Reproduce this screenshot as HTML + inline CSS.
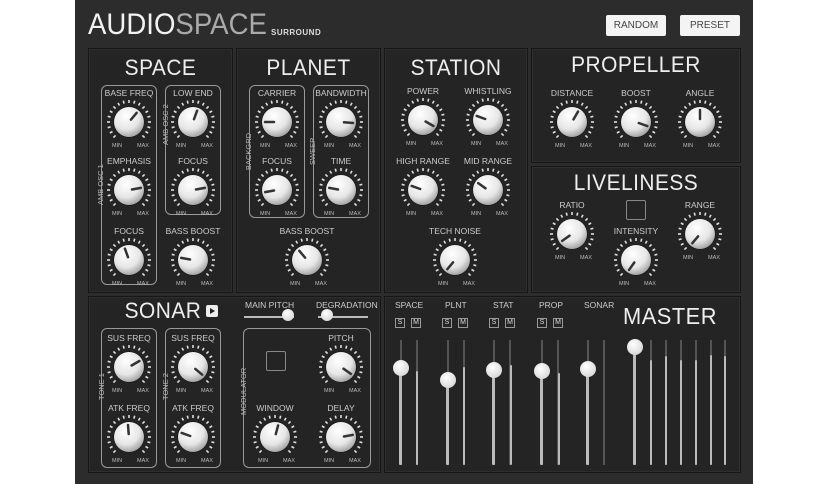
<!DOCTYPE html>
<html><head><meta charset="utf-8"><style>
*{margin:0;padding:0;box-sizing:border-box}
body{width:836px;height:484px;background:#fff;position:relative;overflow:hidden;font-family:"Liberation Sans","DejaVu Sans",sans-serif;color:#ddd}
#app{position:absolute;left:75px;top:0;width:678px;height:484px;background:#2c2c2c}
.p{position:absolute;background:#242424;border:1px solid #161616;box-shadow:inset 0 0 0 1px #2e2e2e}
.t{position:absolute;color:#eee;font-size:22px;letter-spacing:0.5px;text-align:center;font-weight:normal;transform:scaleX(0.95)}
.l{position:absolute;font-size:8.5px;color:#ccc;text-align:center;width:80px;margin-left:-40px}
.g{position:absolute;border:1px solid #999;border-radius:6px}
.v{position:absolute;font-size:7.5px;color:#bbb;transform:rotate(-90deg);transform-origin:left top;white-space:nowrap}
.btn{position:absolute;top:15px;height:21px;width:60px;background:#f4f4f4;color:#444;font-size:10px;text-align:center;line-height:21px;border-radius:2px}
.chk{position:absolute;width:20px;height:20px;border:1px solid #888;border-radius:2px}
.tr{position:absolute;width:3px;background:#bbb;border-radius:1px}
.tr2{position:absolute;width:2px;background:#555}
.h{position:absolute;width:16px;height:16px;border-radius:50%;background:radial-gradient(circle at 40% 35%,#fff,#ccc);margin-left:-7px}
.sm{position:absolute;top:318px;width:10px;height:10px;border:1px solid #999;font-size:7px;line-height:8px;text-align:center;color:#ddd}
.ml{position:absolute;top:300px;font-size:8.5px;color:#ccc}
</style></head><body>
<div id="app">
<div style="position:absolute;left:13px;top:8px;font-size:30px;color:#f2f2f2;letter-spacing:0px;transform:scaleX(0.92);transform-origin:left;font-weight:normal">AUDIO<span style="color:#aaa">SPACE</span></div>
<div style="position:absolute;left:196px;top:28px;font-size:8px;font-weight:bold;color:#ddd;letter-spacing:0.5px">SURROUND</div>
<div class="btn" style="left:531px">RANDOM</div>
<div class="btn" style="left:605px">PRESET</div>
</div>
<div class="p" style="left:88px;top:48px;width:145px;height:245px"></div>
<div class="p" style="left:236px;top:48px;width:145px;height:245px"></div>
<div class="p" style="left:384px;top:48px;width:144px;height:245px"></div>
<div class="p" style="left:531px;top:48px;width:210px;height:115px"></div>
<div class="p" style="left:531px;top:166px;width:210px;height:127px"></div>
<div class="p" style="left:88px;top:296px;width:293px;height:177px"></div>
<div class="p" style="left:384px;top:296px;width:357px;height:177px"></div>

<div class="t" style="left:88px;top:55px;width:145px">SPACE</div>
<div class="t" style="left:236px;top:55px;width:145px">PLANET</div>
<div class="t" style="left:384px;top:55px;width:144px">STATION</div>
<div class="t" style="left:531px;top:52px;width:210px">PROPELLER</div>
<div class="t" style="left:531px;top:170px;width:210px">LIVELINESS</div>
<div class="t" style="left:118px;top:298px;width:90px">SONAR</div>
<div style="position:absolute;left:206px;top:305px;width:12px;height:12px;background:#eee;border-radius:2px"><div style="position:absolute;left:4px;top:3px;border-left:5px solid #222;border-top:3px solid transparent;border-bottom:3px solid transparent"></div></div>
<div class="t" style="left:620px;top:303px;width:100px;font-size:23px">MASTER</div>

<div class="g" style="left:101px;top:85px;width:56px;height:200px"></div>
<div class="g" style="left:165px;top:85px;width:56px;height:130px"></div>
<div class="g" style="left:249px;top:85px;width:56px;height:133px"></div>
<div class="g" style="left:313px;top:85px;width:56px;height:133px"></div>
<div class="g" style="left:101px;top:328px;width:56px;height:140px"></div>
<div class="g" style="left:165px;top:328px;width:56px;height:140px"></div>
<div class="g" style="left:243px;top:328px;width:128px;height:140px"></div>
<div class="v" style="left:96px;top:205px">AMB OSC 1</div>
<div class="v" style="left:161px;top:145px">AMB OSC 2</div>
<div class="v" style="left:244px;top:170px">BACKGRD</div>
<div class="v" style="left:308px;top:165px">SWEEP</div>
<div class="v" style="left:97px;top:400px">TONE 1</div>
<div class="v" style="left:161px;top:400px">TONE 2</div>
<div class="v" style="left:239px;top:415px">MODULATOR</div>

<div class="chk" style="left:266px;top:351px"></div>
<div class="chk" style="left:626px;top:200px"></div>

<div class="ml" style="left:245px">MAIN PITCH</div>
<div class="ml" style="left:316px">DEGRADATION</div>
<div style="position:absolute;left:244px;top:316px;width:50px;height:2px;background:#bbb"></div>
<div style="position:absolute;left:318px;top:316px;width:50px;height:2px;background:#bbb"></div>
<div class="h" style="left:288px;top:309px;width:12px;height:12px;margin-left:-6px"></div>
<div class="h" style="left:327px;top:309px;width:12px;height:12px;margin-left:-6px"></div>

<div class="ml" style="left:395px">SPACE</div>
<div class="ml" style="left:445px">PLNT</div>
<div class="ml" style="left:493px">STAT</div>
<div class="ml" style="left:539px">PROP</div>
<div class="ml" style="left:584px">SONAR</div>
<div class="sm" style="left:395px">S</div><div class="sm" style="left:411px">M</div>
<div class="sm" style="left:442px">S</div><div class="sm" style="left:458px">M</div>
<div class="sm" style="left:489px">S</div><div class="sm" style="left:505px">M</div>
<div class="sm" style="left:537px">S</div><div class="sm" style="left:553px">M</div>

<div id="k"></div>
<script>
var K=[
[129,122,"BASE FREQ",40],[193,122,"LOW END",20],[129,190,"EMPHASIS",80],[193,190,"FOCUS",80],[129,260,"FOCUS",-20],[193,260,"BASS BOOST",-80],
[277,122,"CARRIER",-90],[341,122,"BANDWIDTH",95],[277,190,"FOCUS",-100],[341,190,"TIME",-80],[307,260,"BASS BOOST",-40],
[423,120,"POWER",120],[488,120,"WHISTLING",-70],[423,190,"HIGH RANGE",-70],[488,190,"MID RANGE",-55],[455,260,"TECH NOISE",-140],
[572,122,"DISTANCE",30],[636,122,"BOOST",110],[700,122,"ANGLE",0],
[572,234,"RATIO",-125],[700,234,"RANGE",-140],[636,260,"INTENSITY",-145],
[129,367,"SUS FREQ",60],[193,367,"SUS FREQ",130],[129,437,"ATK FREQ",-5],[193,437,"ATK FREQ",-70],
[341,367,"PITCH",125],[275,437,"WINDOW",15],[341,437,"DELAY",80]];
var h="";
K.forEach(function(k,i){
 var x=k[0],y=k[1],a=k[3];
 var s='<svg style="position:absolute;left:'+(x-24)+'px;top:'+(y-24)+'px" width="48" height="54" viewBox="-24 -24 48 54">';
 for(var d=-135;d<=135;d+=15){var r=d*Math.PI/180;s+='<line x1="'+(19*Math.sin(r)).toFixed(1)+'" y1="'+(-19*Math.cos(r)).toFixed(1)+'" x2="'+(22*Math.sin(r)).toFixed(1)+'" y2="'+(-22*Math.cos(r)).toFixed(1)+'" stroke="#ddd" stroke-width="1.6"/>';}
 s+='<defs><radialGradient id="g'+i+'" cx="40%" cy="30%" r="75%"><stop offset="0" stop-color="#fff"/><stop offset=".6" stop-color="#e6e6e6"/><stop offset="1" stop-color="#9a9a9a"/></radialGradient></defs>';
 s+='<circle r="15.5" fill="#111"/><circle r="15" fill="url(#g'+i+')"/>';
 var r=a*Math.PI/180;
 s+='<line x1="'+(3*Math.sin(r)).toFixed(1)+'" y1="'+(-3*Math.cos(r)).toFixed(1)+'" x2="'+(12*Math.sin(r)).toFixed(1)+'" y2="'+(-12*Math.cos(r)).toFixed(1)+'" stroke="#333" stroke-width="2.5" stroke-linecap="round"/>';
 s+='<text x="-17" y="25" font-size="5.5" fill="#bbb" font-family="Liberation Sans">MIN</text><text x="8" y="25" font-size="5.5" fill="#bbb" font-family="Liberation Sans">MAX</text></svg>';
 s+='<div class="l" style="left:'+x+'px;top:'+(y-34)+'px">'+k[2]+'</div>';
 h+=s;
});
var T=[[400,368],[447,380],[493,370],[541,371],[587,369]];
T.forEach(function(t){
 h+='<div class="tr2" style="left:'+(t[0])+'px;top:340px;height:125px"></div>';
 h+='<div class="tr" style="left:'+(t[0]-1)+'px;top:'+t[1]+'px;height:'+(465-t[1])+'px"></div>';
 h+='<div class="tr2" style="left:'+(t[0]+16)+'px;top:340px;height:125px"></div>';
});
var L=[372,0,368,376,372,380,380];
[416,463,510,558].forEach(function(x,i){h+='<div class="tr" style="left:'+x+'px;top:'+[371,367,365,373][i]+'px;height:'+(465-[371,367,365,373][i])+'px;width:2px"></div>';});
h+='<div class="tr2" style="left:634px;top:340px;height:125px"></div><div class="tr" style="left:633px;top:347px;height:118px"></div>';
[650,665,680,695,710,724].forEach(function(x,i){var y=[360,356,360,360,355,356][i];h+='<div class="tr2" style="left:'+x+'px;top:340px;height:125px"></div><div class="tr" style="left:'+x+'px;top:'+y+'px;height:'+(465-y)+'px;width:2px"></div>';});
T.forEach(function(t){h+='<div class="h" style="left:'+t[0]+'px;top:'+(t[1]-8)+'px"></div>';});
h+='<div class="h" style="left:634px;top:339px"></div>';
document.getElementById("k").innerHTML=h;
</script>
</body></html>
